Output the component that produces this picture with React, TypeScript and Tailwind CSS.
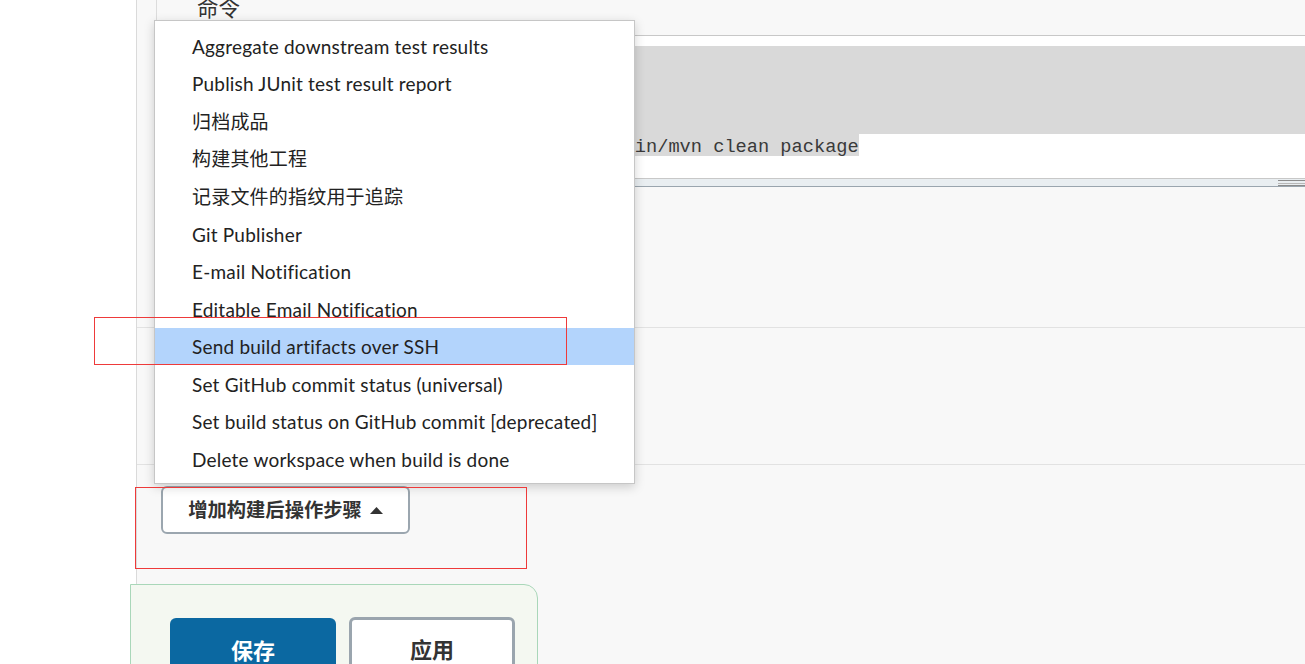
import React from 'react';

const menuItems = [
  'Aggregate downstream test results',
  'Publish JUnit test result report',
  '归档成品',
  '构建其他工程',
  '记录文件的指纹用于追踪',
  'Git Publisher',
  'E-mail Notification',
  'Editable Email Notification',
  'Send build artifacts over SSH',
  'Set GitHub commit status (universal)',
  'Set build status on GitHub commit [deprecated]',
  'Delete workspace when build is done',
];

// --- shell textarea with a selection ---
const ShellBox: React.FC = () => (
  <div className="mt-[16px] bg-white border-t border-[#c8c8c8]">
    <div className="pt-[10px] font-['Liberation_Mono',monospace] text-[18.67px] leading-[22px] text-[#3a3a3a] whitespace-pre">
      <div className="bg-[#d9d9d9] pl-[10px] h-[22px]">#!/bin/bash</div>
      <div className="bg-[#d9d9d9] pl-[10px] h-[22px]">cd /var/jenkins_home/workspace</div>
      <div className="bg-[#d9d9d9] pl-[10px] h-[22px]">export JAVA_HOME=/usr/local/jdk</div>
      <div className="bg-[#d9d9d9] pl-[10px] h-[22px]">echo "start build"</div>
      <div className="pl-[10px] h-[22px]">
        <span className="inline-block h-[22px] leading-[26px] bg-[#d9d9d9]">/usr/local/jenkins/tools/apache-maven3/bin/mvn clean package</span>
      </div>
      <div className="h-[22px]" />
    </div>
    <div className="relative h-[9px] border-t border-b border-t-[#c8c8c8] border-b-[#9aa5ae] bg-[#e9eef1]">
      <div className="absolute right-0 top-[1px] w-[27px] h-[6px] flex flex-col justify-between">
        <div className="h-px bg-[#8c8c8c]" />
        <div className="h-px bg-[#b8b8b8]" />
        <div className="h-px bg-[#8c8c8c]" />
      </div>
    </div>
  </div>
);

export default function App() {
  return (
    <div className="relative w-[1305px] h-[664px] overflow-hidden bg-white flex font-['Lato','Noto_Sans_CJK_SC',sans-serif] text-[#333]">
      <div className="w-[136px] shrink-0" />
      <div className="flex-1 flex flex-col border-l border-[#dadada] bg-[#f8f8f8]">
        <section className="h-[328px] shrink-0 border-b border-[#e2e2e2]">
          <div className="ml-[19px] h-full border-l border-[#dcdcdc] pl-[20px]">
            <div className="-mt-[3px] h-[22px] leading-[22px] pl-[20px] text-[21.5px]">命令</div>
            <ShellBox />
          </div>
        </section>
        <section className="h-[137px] shrink-0 border-b border-[#e2e2e2]" />
        <section className="h-[119px] shrink-0 pt-[21px] pl-[24px]">
          <button className="w-[249px] h-[48px] flex items-center justify-center gap-[8px] bg-white border-2 border-[#9ba6af] rounded-[6px] text-[19.3px] font-bold text-[#333]">
            增加构建后操作步骤
            <svg width="13" height="7" viewBox="0 0 13 7">
              <path d="M0 7 L6.5 0 L13 7 Z" fill="#333" />
            </svg>
          </button>
        </section>
        <div className="-ml-[7px] w-[408px] flex-1 border border-[#a9d7b9] rounded-tr-[14px] bg-[#f4f8f1] pt-[33px] pl-[39px] flex gap-[13px] relative">
          <button className="w-[166px] h-[64px] rounded-[6px] bg-[#0b68a1] text-white text-[22px] font-bold flex items-center justify-center">
            保存
          </button>
          <button className="w-[166px] h-[64px] -mt-px rounded-[6px] bg-white border-[3px] border-[#9aa5ae] text-[#333] text-[22px] font-bold flex items-center justify-center">
            应用
          </button>
        </div>
      </div>

      {/* dropdown menu */}
      <div className="absolute left-[154px] top-[20px] w-[481px] bg-white border border-[#c6c6c6] shadow-[0_3px_10px_rgba(0,0,0,0.18)] pt-[6px] pb-[5px]">
        {menuItems.map((item, i) => (
          <div
            key={item}
            className={`h-[37.6px] flex items-center pl-[37px] pt-[2px] text-[19px] tracking-[0.2px] text-[#222] ${i === 8 ? 'bg-[#b3d4fc]' : ''}`}
          >
            {item}
          </div>
        ))}
      </div>

      {/* annotation boxes */}
      <div className="absolute left-[94px] top-[317px] w-[473px] h-[48px] border border-[#ee3a3a]" />
      <div className="absolute left-[135px] top-[487px] w-[392px] h-[82px] border border-[#ee3a3a]" />
    </div>
  );
}
